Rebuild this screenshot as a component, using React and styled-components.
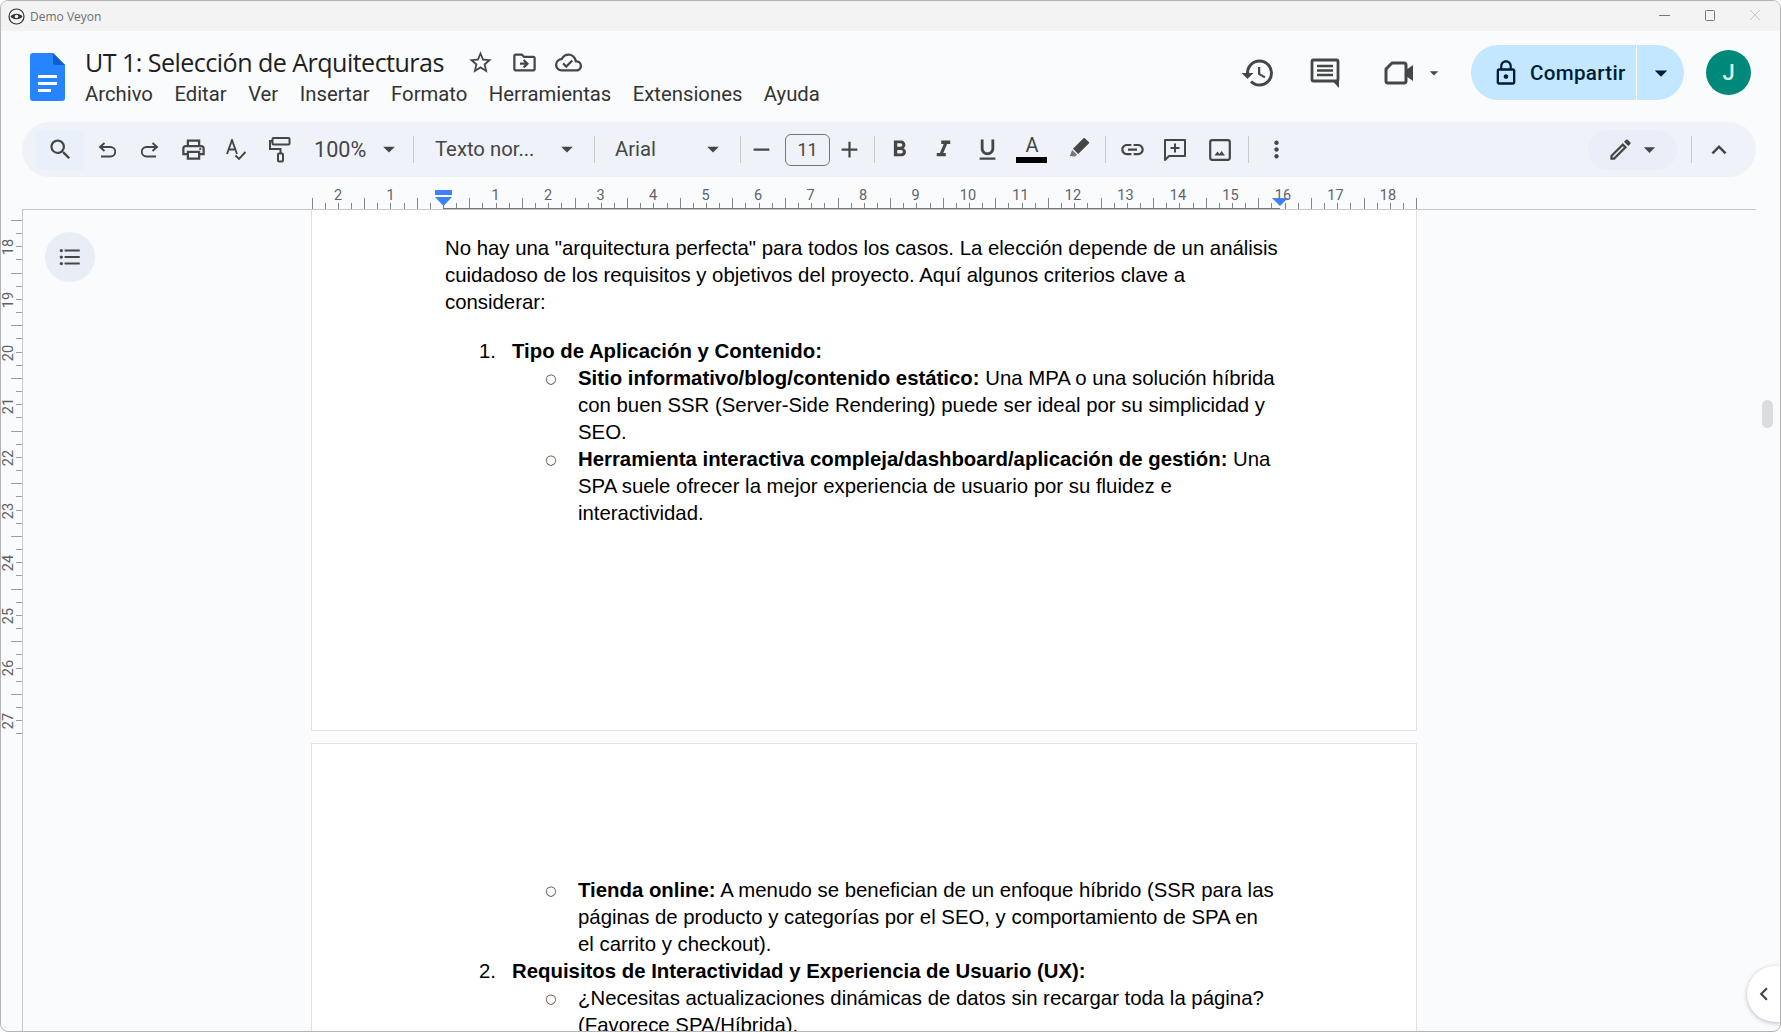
import React from "react";
import styled, { createGlobalStyle } from "styled-components";
import {
  MdAdd,
  MdArrowDropDown,
  MdChevronLeft,
  MdExpandLess,
  MdFormatBold,
  MdFormatItalic,
  MdFormatListBulleted,
  MdFormatUnderlined,
  MdHistory,
  MdLink,
  MdLockOutline,
  MdMoreVert,
  MdOutlineCloudDone,
  MdOutlineDriveFileMove,
  MdOutlineEdit,
  MdOutlinePrint,
  MdRemove,
  MdSearch,
  MdStarBorder,
} from "react-icons/md";

const GlobalStyle = createGlobalStyle`
  html, body {
    margin: 0;
    padding: 0;
    background: #fff;
    overflow: hidden;
  }
`;

const Frame = styled.div`
  position: relative;
  box-sizing: border-box;
  width: 1781px;
  height: 1032px;
  display: flex;
  flex-direction: column;
  overflow: hidden;
  border: 1px solid #b4b4b4;
  border-radius: 8px;
  background: #f9fbfd;
  font-family: Roboto, "Liberation Sans", sans-serif;
`;

const TitleBar = styled.div`
  flex: none;
  height: 30px;
  display: flex;
  align-items: center;
  padding-left: 7px;
  padding-right: 3px;
  background: #f3f3f3;
`;

const AppName = styled.span`
  margin-left: 5px;
  font-family: "Open Sans", sans-serif;
  font-size: 12px;
  color: #6f6f6f;
`;

const WindowButtons = styled.div`
  margin-left: auto;
  display: flex;
  align-items: center;
  margin-top: -2px;
`;

const WindowButton = styled.div`
  width: 45px;
  height: 30px;
  display: flex;
  align-items: center;
  justify-content: center;
  color: ${(p) => (p.$muted ? "#c8c8c8" : "#777")};
`;

const Header = styled.div`
  flex: none;
  height: 91px;
  display: flex;
  padding-left: 29px;
  padding-right: 29px;
`;

const Logo = styled.svg`
  width: 35px;
  height: 48px;
  margin-top: 22px;
  flex: none;
`;

const TitleBlock = styled.div`
  margin-left: 20px;
  padding-top: 13px;
`;

const TitleRow = styled.div`
  display: flex;
  align-items: center;
  height: 36px;
`;

const DocTitle = styled.div`
  font-family: "Open Sans", sans-serif;
  font-size: 25.1px;
  letter-spacing: -0.55px;
  color: #1f1f1f;
  white-space: nowrap;
  width: 358px;
  margin-right: 15px;
`;

const TitleIcon = styled.div`
  width: 44px;
  display: flex;
  justify-content: center;
  color: #444746;
  font-size: 27px;
`;

const MenuBar = styled.div`
  display: flex;
  gap: 21.5px;
  height: 30px;
  align-items: center;
  margin-top: -1px;
`;

const MenuItem = styled.div`
  font-size: 20.3px;
  color: #333;
  white-space: nowrap;
`;

const HeaderRight = styled.div`
  margin-left: auto;
  display: flex;
  align-items: center;
  padding-bottom: 8px;
`;

const HeaderIcon = styled.div`
  width: ${(p) => p.$w}px;
  display: flex;
  justify-content: center;
  color: #444746;
  font-size: ${(p) => p.$size || 36}px;
`;

const VideoGroup = styled.div`
  display: flex;
  align-items: center;
  margin-left: 17px;
  margin-right: 27px;
`;

const ShareButton = styled.div`
  height: 55px;
  width: 213px;
  display: flex;
  border-radius: 28px;
  overflow: hidden;
  background: #c2e7ff;
  color: #001d35;
`;

const ShareMain = styled.div`
  width: 166px;
  display: flex;
  align-items: center;
  padding-left: 21px;
  gap: 10px;
  font-size: 28px;
  box-sizing: border-box;
  border-right: 1px solid #fff;
`;

const ShareLabel = styled.span`
  font-size: 20.6px;
  font-weight: 500;
  letter-spacing: 0.3px;
`;

const ShareArrow = styled.div`
  flex: 1;
  display: flex;
  align-items: center;
  justify-content: center;
  font-size: 30px;
`;

const Avatar = styled.div`
  width: 45px;
  height: 45px;
  margin-left: 22px;
  border-radius: 50%;
  background: #00897b;
  color: #d7f0ea;
  display: flex;
  align-items: center;
  justify-content: center;
  font-size: 22px;
  font-weight: 500;
`;

const Toolbar = styled.div`
  flex: none;
  height: 55px;
  margin: 0 24px 0 21px;
  padding: 0 10px 0 14px;
  display: flex;
  align-items: center;
  border-radius: 28px;
  background: #eff2f8;
  color: #444746;
`;

const ToolButton = styled.div`
  flex: none;
  position: relative;
  width: ${(p) => p.$w}px;
  height: 40px;
  margin-left: ${(p) => p.$ml || 0}px;
  display: flex;
  align-items: center;
  justify-content: center;
  font-size: ${(p) => p.$size || 27}px;
  background: ${(p) => (p.$active ? "#eaf0fa" : "transparent")};
`;

const Separator = styled.div`
  flex: none;
  width: 1px;
  height: 27px;
  background: #c7c9cc;
  margin-left: ${(p) => p.$ml || 0}px;
`;

const Select = styled.div`
  flex: none;
  box-sizing: border-box;
  width: ${(p) => p.$w}px;
  padding-left: ${(p) => p.$pl}px;
  padding-right: ${(p) => p.$pr}px;
  padding-bottom: 1px;
  display: flex;
  align-items: center;
  justify-content: space-between;
  font-size: ${(p) => p.$fs || 20.3}px;
  white-space: nowrap;
  svg {
    font-size: 28px;
    flex: none;
  }
`;

const SizeBox = styled.div`
  flex: none;
  box-sizing: border-box;
  width: 45px;
  height: 32px;
  margin-left: 4px;
  border: 1px solid #747775;
  border-radius: 6px;
  display: flex;
  align-items: center;
  justify-content: center;
  font-size: 18px;
`;

const ColorLetter = styled.span`
  font-size: 20px;
  line-height: 17px;
  margin-bottom: 9px;
`;

const ColorBar = styled.div`
  position: absolute;
  left: 5px;
  right: 6px;
  bottom: 7px;
  height: 6px;
  background: #000;
`;

const ModePill = styled.div`
  flex: none;
  width: 89px;
  height: 40px;
  margin-left: auto;
  border-radius: 20px;
  background: #e9eef8;
  display: flex;
  align-items: center;
  padding-left: 19px;
  box-sizing: border-box;
  font-size: 27px;
  svg + svg {
    margin-left: 2px;
  }
`;

const RulerRow = styled.div`
  flex: none;
  height: 33px;
  margin: 0 24px 0 21px;
  padding-left: 289px;
  box-sizing: border-box;
  border-bottom: 1px solid #c7c7c7;
`;

const RulerSvg = styled.svg`
  display: block;
`;

const Workspace = styled.div`
  flex: 1;
  min-height: 0;
  display: flex;
`;

const SideRuler = styled.div`
  flex: none;
  width: 21px;
  box-sizing: content-box;
  border-right: 1px solid #c7c7c7;
`;

const SideRulerSvg = styled.svg`
  display: block;
`;

const Gutter = styled.div`
  flex: none;
  width: 288px;
  padding: 22px 0 0 22px;
  box-sizing: border-box;
`;

const OutlineButton = styled.div`
  width: 50px;
  height: 50px;
  border-radius: 50%;
  background: #e9eef6;
  color: #444746;
  display: flex;
  align-items: center;
  justify-content: center;
  font-size: 26px;
`;

const Pages = styled.div`
  flex: none;
  width: 1106px;
  display: flex;
  flex-direction: column;
  gap: 12px;
`;

const Page = styled.div`
  flex: none;
  box-sizing: border-box;
  background: #fff;
  border: 1px solid #dfe1e5;
  border-top: ${(p) => (p.$clipped ? "none" : "1px solid #dfe1e5")};
  height: ${(p) => p.$h}px;
  padding: ${(p) => p.$pt}px 0 0 133px;
  overflow: hidden;
  font-family: "Liberation Sans", Arial, sans-serif;
  font-size: 20.36px;
  line-height: 27px;
  color: #000;
`;

const Body = styled.div`
  width: 838px;
  margin-bottom: 22px;
`;

const NumItem = styled.div`
  display: flex;
  width: 838px;
  padding-left: 34px;
  box-sizing: border-box;
`;

const SubItem = styled.div`
  display: flex;
  width: 838px;
  padding-left: 100px;
  box-sizing: border-box;
`;

const Marker = styled.span`
  flex: none;
  width: 33px;
`;

const Bullet = styled.span`
  flex: none;
  width: 33px;
  font-family: "DejaVu Sans", sans-serif;
  font-size: 13px;
  color: #444;
`;

const Bold = styled.b`
  font-weight: 700;
`;

const RightGutter = styled.div`
  flex: 1;
  padding: 190px 0 0 345px;
  box-sizing: border-box;
`;

const ScrollThumb = styled.div`
  width: 11px;
  height: 28px;
  border-radius: 6px;
  background: #dadce0;
`;

const SideToggle = styled.div`
  position: absolute;
  right: -1px;
  bottom: 9px;
  width: 34px;
  height: 56px;
  border-radius: 28px 0 0 28px;
  background: #fff;
  box-shadow: 0 1px 4px rgba(60, 64, 67, 0.35);
  display: flex;
  align-items: center;
  padding-left: 4px;
  box-sizing: border-box;
  color: #444746;
  font-size: 26px;
`;

const DocsLogo = () => (
  <Logo viewBox="0 0 35 48">
    <path d="M3 0h20l12 12v33a3 3 0 0 1-3 3H3a3 3 0 0 1-3-3V3a3 3 0 0 1 3-3z" fill="#2684fc" />
    <path d="M23 0l12 12H26a3 3 0 0 1-3-3z" fill="#0b5fd0" />
    <path d="M8 22h19v3H8zM8 29h19v3H8zM8 36h13v3H8z" fill="#fff" />
  </Logo>
);

const VeyonIcon = () => (
  <svg width="17" height="17" viewBox="0 0 17 17">
    <circle cx="8.5" cy="8.5" r="7.5" fill="none" stroke="#333" strokeWidth="1.2" />
    <path d="M2.5 8.5C5 4.8 12 4.8 14.5 8.5 12 12.2 5 12.2 2.5 8.5z" fill="#333" />
    <circle cx="8.5" cy="8.5" r="1.8" fill="#f3f3f3" />
  </svg>
);

const CommentsIcon = () => (
  <svg width="30" height="30" viewBox="0 0 30 30" fill="none" stroke="#444746">
    <rect x="2" y="2" width="26" height="21" rx="1.5" strokeWidth="2.8" />
    <path d="M7 8h16M7 12.5h16M7 17h16" strokeWidth="2.6" />
    <path d="M23 23.5h6v6.5z" fill="#444746" stroke="none" />
  </svg>
);

const MeetIcon = () => (
  <svg width="30" height="24" viewBox="0 0 30 24" fill="none">
    <path
      d="M8 2h12a2 2 0 0 1 2 2v16a2 2 0 0 1-2 2H4a2 2 0 0 1-2-2V8z"
      stroke="#444746"
      strokeWidth="3"
      strokeLinejoin="round"
    />
    <path d="M22 9l7-5v16l-7-5z" fill="#444746" />
  </svg>
);

const UndoIcon = () => (
  <svg width="18" height="16" viewBox="0 0 18 16" fill="none" stroke="#444746" strokeWidth="1.9">
    <path d="M6.5 1L2 5l4.5 4" />
    <path d="M2 5h10.5a4.5 4.5 0 0 1 0 9.5H3" />
  </svg>
);

const RedoIcon = () => (
  <svg width="18" height="16" viewBox="0 0 18 16" fill="none" stroke="#444746" strokeWidth="1.9">
    <path d="M11.5 1L16 5l-4.5 4" />
    <path d="M16 5H5.5a4.5 4.5 0 0 0 0 9.5H15" />
  </svg>
);

const SpellIcon = () => (
  <svg width="21" height="22" viewBox="0 0 21 22" fill="none" stroke="#444746" strokeWidth="1.9">
    <path d="M1 15L6 1l5 14M3 10.5h6" />
    <path d="M9.5 16.5l3.5 3.5 6.5-7" />
  </svg>
);

const PaintIcon = () => (
  <svg width="22" height="26" viewBox="0 0 22 26" fill="none" stroke="#444746" strokeWidth="2">
    <rect x="3.5" y="1" width="17" height="6.5" rx="1" />
    <path d="M3.5 4H1v8h10.5v4.5" />
    <rect x="9" y="16.5" width="5" height="8" rx="1" />
  </svg>
);

const MarkerIcon = () => (
  <svg width="24" height="24" viewBox="0 2 24 24" fill="#444746">
    <path d="M16.5 2.2a1 1 0 0 1 1.4 0l3.9 3.9a1 1 0 0 1 0 1.4L11.2 18 6 12.8z" />
    <path d="M5.2 14l4.8 4.8-2 1.7-5.2-.5z" opacity="0.72" />
  </svg>
);

const AddCommentIcon = () => (
  <svg width="24" height="24" viewBox="0 0 24 24" fill="none" stroke="#444746" strokeWidth="2">
    <path d="M2 2h20v16H6l-4 4z" strokeLinejoin="round" />
    <path d="M12 5.5v9M7.5 10h9" />
  </svg>
);

const ImageIcon = () => (
  <svg width="22" height="22" viewBox="0 0 22 22" fill="none">
    <rect x="1.2" y="1.2" width="19.6" height="19.6" rx="2" stroke="#444746" strokeWidth="2.2" />
    <path d="M5.5 16.5l3-4 2 2.5 2-3 3.5 4.5z" fill="#444746" />
  </svg>
);

const HorizontalRuler = () => {
  const width = 1106;
  const cm = 52.6;
  const zero = 132;
  const ticks = [];
  const labels = [];
  for (let q = -10; q <= 74; q++) {
    const x = Math.round(zero + (q * cm) / 4) + 0.5;
    const long = ((q % 4) + 4) % 4 === 2;
    ticks.push(<line key={q} x1={x} x2={x} y1={long ? 21 : 26} y2={32} stroke="#80868b" />);
  }
  for (let n = -2; n <= 18; n++) {
    if (n === 0) continue;
    labels.push(
      <text
        key={n}
        x={zero + n * 52.5}
        y={23}
        textAnchor="middle"
        fontFamily="Roboto, sans-serif"
        fontSize="14.5"
        fill="#5f6368"
      >
        {Math.abs(n)}
      </text>
    );
  }
  return (
    <RulerSvg width={width} height={32} viewBox={`0 0 ${width} 32`}>
      {ticks}
      {labels}
      <line x1={132} x2={969} y1={31.5} y2={31.5} stroke="#70757a" />
      <rect x={124} y={13} width={17} height={5} fill="#3b82f6" />
      <path d="M124 20h17l-8.5 9z" fill="#3b82f6" />
      <path d="M961 21h16l-8 8z" fill="#3b82f6" />
    </RulerSvg>
  );
};

const VerticalRuler = () => {
  const ticks = [];
  const labels = [];
  for (let q = 0; q <= 39; q++) {
    const y = Math.round(10 + (q * 52.65) / 4) + 0.5;
    ticks.push(
      <line key={q} x1={q % 4 === 0 ? 10 : 15} x2={21} y1={y} y2={y} stroke="#9aa0a6" />
    );
  }
  const rows = [
    [18, 37],
    [19, 90],
    [20, 143],
    [21, 196],
    [22, 248],
    [23, 301],
    [24, 353],
    [25, 406],
    [26, 458],
    [27, 511],
  ];
  rows.forEach(([n, y]) => {
    labels.push(
      <text
        key={n}
        transform={`translate(12 ${y}) rotate(-90)`}
        textAnchor="middle"
        fontFamily="Roboto, sans-serif"
        fontSize="14.5"
        fill="#5f6368"
      >
        {n}
      </text>
    );
  });
  return (
    <SideRulerSvg width="21" height="540" viewBox="0 0 21 540">
      {ticks}
      {labels}
    </SideRulerSvg>
  );
};

export default function App() {
  return (
    <>
      <GlobalStyle />
      <Frame>
        <TitleBar>
          <VeyonIcon />
          <AppName>Demo Veyon</AppName>
          <WindowButtons>
            <WindowButton>
              <svg width="11" height="11" viewBox="0 0 11 11">
                <path d="M0 5.5h11" stroke="currentColor" />
              </svg>
            </WindowButton>
            <WindowButton>
              <svg width="10" height="11" viewBox="0 0 10 11">
                <rect x="0.5" y="0.5" width="9" height="10" rx="1" fill="none" stroke="currentColor" />
              </svg>
            </WindowButton>
            <WindowButton $muted>
              <svg width="12" height="12" viewBox="0 0 12 12">
                <path d="M1 1l10 10M11 1L1 11" stroke="currentColor" />
              </svg>
            </WindowButton>
          </WindowButtons>
        </TitleBar>

        <Header>
          <DocsLogo />
          <TitleBlock>
            <TitleRow>
              <DocTitle>UT 1: Selección de Arquitecturas</DocTitle>
              <TitleIcon><MdStarBorder /></TitleIcon>
              <TitleIcon><MdOutlineDriveFileMove /></TitleIcon>
              <TitleIcon><MdOutlineCloudDone /></TitleIcon>
            </TitleRow>
            <MenuBar>
              <MenuItem>Archivo</MenuItem>
              <MenuItem>Editar</MenuItem>
              <MenuItem>Ver</MenuItem>
              <MenuItem>Insertar</MenuItem>
              <MenuItem>Formato</MenuItem>
              <MenuItem>Herramientas</MenuItem>
              <MenuItem>Extensiones</MenuItem>
              <MenuItem>Ayuda</MenuItem>
            </MenuBar>
          </TitleBlock>
          <HeaderRight>
            <HeaderIcon $w={69}><MdHistory /></HeaderIcon>
            <HeaderIcon $w={65}><CommentsIcon /></HeaderIcon>
            <VideoGroup>
              <HeaderIcon $w={50}><MeetIcon /></HeaderIcon>
              <HeaderIcon $w={20} $size={30}><MdArrowDropDown /></HeaderIcon>
            </VideoGroup>
            <ShareButton>
              <ShareMain>
                <MdLockOutline />
                <ShareLabel>Compartir</ShareLabel>
              </ShareMain>
              <ShareArrow><MdArrowDropDown /></ShareArrow>
            </ShareButton>
            <Avatar>J</Avatar>
          </HeaderRight>
        </Header>

        <Toolbar>
          <ToolButton $w={48} $active><MdSearch /></ToolButton>
          <ToolButton $w={43} $ml={1}><UndoIcon /></ToolButton>
          <ToolButton $w={43}><RedoIcon /></ToolButton>
          <ToolButton $w={43} $ml={1}><MdOutlinePrint /></ToolButton>
          <ToolButton $w={43}><SpellIcon /></ToolButton>
          <ToolButton $w={43}><PaintIcon /></ToolButton>
          <Select $w={112} $pl={13} $pr={10} $fs={21.6}>100%<MdArrowDropDown /></Select>
          <Separator />
          <Select $w={180} $pl={21} $pr={13}>Texto nor...<MdArrowDropDown /></Select>
          <Separator />
          <Select $w={145} $pl={20} $pr={13}>Arial<MdArrowDropDown /></Select>
          <Separator />
          <ToolButton $w={40}><MdRemove /></ToolButton>
          <SizeBox>11</SizeBox>
          <ToolButton $w={38}><MdAdd /></ToolButton>
          <Separator $ml={6} />
          <ToolButton $w={48}><MdFormatBold /></ToolButton>
          <ToolButton $w={40}><MdFormatItalic /></ToolButton>
          <ToolButton $w={48}><MdFormatUnderlined /></ToolButton>
          <ToolButton $w={42}>
            <ColorLetter>A</ColorLetter>
            <ColorBar />
          </ToolButton>
          <ToolButton $w={52}><MarkerIcon /></ToolButton>
          <Separator />
          <ToolButton $w={52}><MdLink /></ToolButton>
          <ToolButton $w={34}><AddCommentIcon /></ToolButton>
          <ToolButton $w={56}><ImageIcon /></ToolButton>
          <Separator />
          <ToolButton $w={54}><MdMoreVert /></ToolButton>
          <ModePill>
            <MdOutlineEdit />
            <MdArrowDropDown />
          </ModePill>
          <Separator $ml={14} />
          <ToolButton $w={54} $size={30}><MdExpandLess /></ToolButton>
        </Toolbar>

        <RulerRow>
          <HorizontalRuler />
        </RulerRow>

        <Workspace>
          <SideRuler>
            <VerticalRuler />
          </SideRuler>
          <Gutter>
            <OutlineButton><MdFormatListBulleted /></OutlineButton>
          </Gutter>
          <Pages>
            <Page $clipped $h={521} $pt={25}>
              <Body>
                No hay una "arquitectura perfecta" para todos los casos. La elección depende de un análisis cuidadoso de los requisitos y objetivos del proyecto. Aquí algunos criterios clave a considerar:
              </Body>
              <NumItem>
                <Marker>1.</Marker>
                <Bold>Tipo de Aplicación y Contenido:</Bold>
              </NumItem>
              <SubItem>
                <Bullet>○</Bullet>
                <span>
                  <Bold>Sitio informativo/blog/contenido estático:</Bold> Una MPA o una solución híbrida con buen SSR (Server-Side Rendering) puede ser ideal por su simplicidad y SEO.
                </span>
              </SubItem>
              <SubItem>
                <Bullet>○</Bullet>
                <span>
                  <Bold>Herramienta interactiva compleja/dashboard/aplicación de gestión:</Bold> Una SPA suele ofrecer la mejor experiencia de usuario por su fluidez e interactividad.
                </span>
              </SubItem>
            </Page>
            <Page $h={400} $pt={133}>
              <SubItem>
                <Bullet>○</Bullet>
                <span>
                  <Bold>Tienda online:</Bold> A menudo se benefician de un enfoque híbrido (SSR para las páginas de producto y categorías por el SEO, y comportamiento de SPA en<br />el carrito y checkout).
                </span>
              </SubItem>
              <NumItem>
                <Marker>2.</Marker>
                <Bold>Requisitos de Interactividad y Experiencia de Usuario (UX):</Bold>
              </NumItem>
              <SubItem>
                <Bullet>○</Bullet>
                <span>¿Necesitas actualizaciones dinámicas de datos sin recargar toda la página? (Favorece SPA/Híbrida).</span>
              </SubItem>
            </Page>
          </Pages>
          <RightGutter>
            <ScrollThumb />
          </RightGutter>
        </Workspace>

        <SideToggle><MdChevronLeft /></SideToggle>
      </Frame>
    </>
  );
}
